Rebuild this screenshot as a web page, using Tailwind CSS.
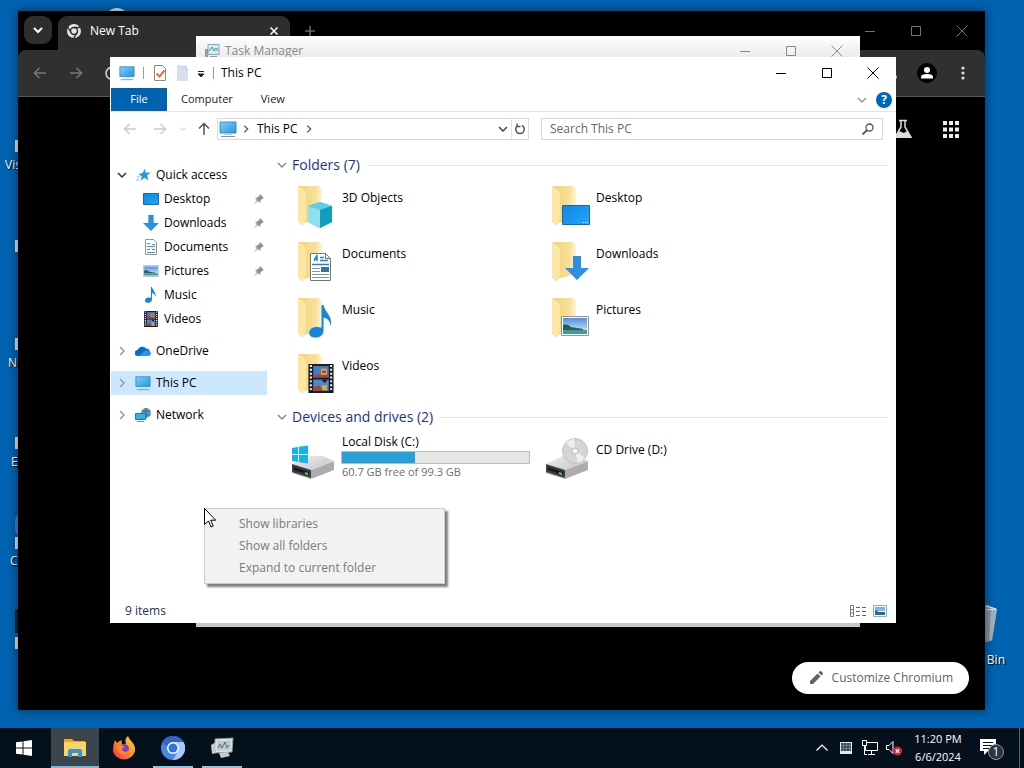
<!DOCTYPE html>
<html lang="en">
<head>
    <meta charset="UTF-8">
    <meta name="viewport" content="width=device-width, initial-scale=1.0">
    <title>This PC</title>
    <script src="https://cdn.jsdelivr.net/npm/@tailwindcss/browser@4"></script>
</head>
<body class="flex flex-col h-screen overflow-hidden bg-[#0063b1] font-['Open_Sans',sans-serif] text-xs text-black">

    <!-- shared icons -->
    <svg class="absolute w-0 h-0" xmlns="http://www.w3.org/2000/svg" aria-hidden="true">
        <defs>
            <linearGradient id="screenBlue" x1="0" y1="0" x2="1" y2="1">
                <stop offset="0" stop-color="#7fd0fb"/><stop offset="1" stop-color="#2196e0"/>
            </linearGradient>
            <linearGradient id="deskBlue" x1="0" y1="0" x2="1" y2="1">
                <stop offset="0" stop-color="#0f86e2"/><stop offset="1" stop-color="#23a5fa"/>
            </linearGradient>
            <linearGradient id="folderBody" x1="0" y1="0" x2="1" y2="0">
                <stop offset="0" stop-color="#f3d173"/><stop offset=".75" stop-color="#f9e19a"/><stop offset="1" stop-color="#fef6dc"/>
            </linearGradient>
            <linearGradient id="driveTop" x1="0" y1="0" x2="1" y2="1">
                <stop offset="0" stop-color="#efedef"/><stop offset="1" stop-color="#c4c2c5"/>
            </linearGradient>
            <linearGradient id="sky" x1="0" y1="0" x2="0" y2="1">
                <stop offset="0" stop-color="#4f8fe0"/><stop offset="1" stop-color="#e6f2fb"/>
            </linearGradient>
            <linearGradient id="fox" x1="1" y1="0" x2="0" y2="1">
                <stop offset="0" stop-color="#ffe03a"/><stop offset=".5" stop-color="#ff8a1f"/><stop offset="1" stop-color="#f0246a"/>
            </linearGradient>
        </defs>
        <symbol id="monitor" viewBox="0 0 18 16">
            <path d="M1 1h16v11H1z" fill="url(#screenBlue)" stroke="#3a8fc8"/>
            <path d="M5 13.500h8" stroke="#c3d3de"/><path d="M2 15.500h14" stroke="#6d9dbb"/>
        </symbol>
        <symbol id="folder" viewBox="0 0 48 48">
            <path d="M7 4h21l3 2v30l-18 5z" fill="url(#folderBody)"/>
            <path d="M7 4l6 4q2 1 2 4v24l-3 8-5-4z" fill="#fbe6a6"/>
        </symbol>
        <symbol id="note" viewBox="0 0 24 32">
            <path d="M12 0h2c1 7 9 10 7 20-1-5-3-7-7-8v13c0 8-14 9-14 2 0-5 6-7 12-5z" fill="#1487dc"/>
        </symbol>
        <symbol id="film" viewBox="0 0 26 30">
            <path d="M0 0h26v30H0z" fill="#1b1b24"/>
            <path d="M5 2h16v12H5z" fill="#4a78c8"/><path d="M5 16h16v12H5z" fill="#4a8ad8"/>
            <path d="M5 11h16v3H5zM5 24l6-2 5 6H5z" fill="#a3472f"/>
            <path d="M13 5h6v6h-6zM14 22h5v5h-5z" fill="#d8ad2c"/><path d="M14 7h4v2h-4z" fill="#b02a20"/>
            <path d="M13 16h7l-3 4z" fill="#222"/>
            <path d="M2.500 1v28M23.500 1v28" stroke="#fff" stroke-width="2" stroke-dasharray="2 2"/>
        </symbol>
        <symbol id="picture" viewBox="0 0 28 20">
            <path d="M.5.5h27v19H.5z" fill="#fff" stroke="#8a959c"/>
            <path d="M2 2h24v16H2z" fill="url(#sky)"/>
            <path d="M2 9q4-2 8 2l12 2v1H2z" fill="#26614c"/><path d="M2 14h24v4H2z" fill="#3f9aa5"/>
        </symbol>
        <symbol id="downArrow" viewBox="0 0 24 24">
            <path d="M8 0h8v12h8L12 24 0 12h8z" fill="#2d8fe0"/>
        </symbol>
        <symbol id="pin" viewBox="0 0 10 10">
            <path d="M6 0l4 4-1.500.5-2 2L6 9 4 7 0 10l3-4-2-2 2.500-.5 2-2z" fill="#8b9299"/>
        </symbol>
        <symbol id="minimize" viewBox="0 0 12 12"><path d="M1 6.500h10" stroke="currentColor"/></symbol>
        <symbol id="maximize" viewBox="0 0 12 12"><path d="M1.500 1.500h9v9h-9z" fill="none" stroke="currentColor"/></symbol>
        <symbol id="close" viewBox="0 0 12 12"><path d="M.5.5l11 11M11.500.5l-11 11" stroke="currentColor"/></symbol>
        <symbol id="chevronDown" viewBox="0 0 12 12"><path d="M2 4l4 4 4-4" fill="none" stroke="currentColor" stroke-width="1.500"/></symbol>
        <symbol id="chevronRight" viewBox="0 0 12 12"><path d="M4 2l4 4-4 4" fill="none" stroke="currentColor" stroke-width="1.500"/></symbol>
        <symbol id="arrowRight" viewBox="0 0 14 14"><path d="M1 7h11M7.500 2l5 5-5 5" fill="none" stroke="currentColor" stroke-width="1.500"/></symbol>
        <symbol id="drive" viewBox="0 0 44 24">
            <path d="M1 10L20 15 43 6v9L20 24 1 18z" fill="#aeacb0"/>
            <path d="M1 9L18 1h14l11 5-23 9z" fill="url(#driveTop)"/>
            <path d="M1 9l19 6v8L1 17z" fill="#3b3d40"/><path d="M3 12l15 5v3L3 15z" fill="#17191b"/>
            <path d="M14 17l3 1v2l-3-1z" fill="#3fe066"/>
        </symbol>
    </svg>

    <main class="relative flex-1">

        <!-- desktop shortcuts peeking out behind the windows -->
        <div class="absolute left-[105px] top-[8px] w-6 h-6 rounded-full bg-[#d5e6f5]"></div>
        <div class="absolute left-[15px] top-[140px] flex flex-col">
            <span class="w-4 h-3 bg-[#d4e4f2]"></span>
            <span class="w-4 h-3 bg-[#d4e4f2] mt-[88px]"></span>
            <span class="w-4 h-3 bg-[#d4e4f2] mt-[86px]"></span>
            <span class="w-4 h-3 bg-[#d4e4f2] mt-[87px]"></span>
            <span class="w-4 h-6 bg-[#4a80c4] rounded-full mt-[64px]"></span>
            <span class="w-4 h-3 bg-[#d4e4f2]"></span>
            <span class="w-4 h-6 bg-[#1c2a36] mt-[60px]"></span>
            <span class="w-4 h-3 bg-[#d4e4f2] mt-1"></span>
        </div>
        <span class="absolute left-[5px] top-[157px] text-white text-shadow-[1px_1px_1px_#000]">Vis</span>
        <span class="absolute left-[8px] top-[355px] text-white text-shadow-[1px_1px_1px_#000]">N</span>
        <span class="absolute left-[11px] top-[454px] text-white text-shadow-[1px_1px_1px_#000]">E</span>
        <span class="absolute left-[10px] top-[553px] text-white text-shadow-[1px_1px_1px_#000]">C</span>
        <div class="absolute right-[19px] top-[604px] flex flex-col items-end">
            <svg class="w-9 h-10 mr-2" viewBox="0 0 36 40"><path d="M3 6l24-5 9 4-5 32-14 2z" fill="#7f93a5"/><path d="M30 4l6 1-5 30-3 2z" fill="#a3b4c2"/><path d="M25 2l10 3-9 1" fill="none" stroke="#dfe8ef"/></svg>
            <span class="mt-2 text-white text-shadow-[1px_1px_1px_#000]">Bin</span>
        </div>

        <!-- Chromium -->
        <section class="absolute left-[18px] right-[39px] top-[11px] bottom-[18px] flex flex-col bg-black text-white shadow-[0_0_10px_#00000080]">
            <div class="flex h-[39px]">
                <button class="ml-[6px] mt-[5px] flex w-7 h-7 items-center justify-center rounded-[9px] bg-[#2e2e2e]" aria-label="Search tabs">
                    <svg class="w-3 h-3" viewBox="0 0 12 12"><path d="M2 4l4 4 4-4" fill="none" stroke="#fff" stroke-width="2"/></svg>
                </button>
                <div class="ml-[6px] mt-[5px] flex w-[232px] items-center rounded-t-[9px] bg-[#2e2e2e] pb-[5px] pl-2 pr-[10px]">
                    <svg class="w-4 h-4" viewBox="0 0 16 16">
                        <circle cx="8" cy="8" r="7" fill="#e6e6e6"/><circle cx="8" cy="8" r="3.500" fill="#e6e6e6" stroke="#2e2e2e" stroke-width="1.500"/>
                        <path d="M8 4.500h7M5 9.800L1.600 3.800M11 9.800L7.500 15.500" stroke="#2e2e2e" stroke-width="1.300"/>
                    </svg>
                    <span class="ml-2 flex-1">New Tab</span>
                    <button aria-label="Close tab"><svg class="w-3 h-3" viewBox="0 0 12 12"><path d="M2.500 2.500l7 7M9.500 2.500l-7 7" stroke="#fff" stroke-width="1.500"/></svg></button>
                </div>
                <button class="ml-[14px] self-center text-[#666]" aria-label="New tab"><svg class="w-3 h-3" viewBox="0 0 12 12"><path d="M6 1v10M1 6h10" stroke="currentColor" stroke-width="1.500"/></svg></button>
                <div class="ml-auto flex text-[#77736c]">
                    <button class="flex w-[46px] items-center justify-center" aria-label="Minimize"><svg class="w-3 h-3"><use href="#minimize"/></svg></button>
                    <button class="flex w-[46px] items-center justify-center" aria-label="Maximize"><svg class="w-3 h-3"><use href="#maximize"/></svg></button>
                    <button class="flex w-[46px] items-center justify-center" aria-label="Close"><svg class="w-3 h-3"><use href="#close"/></svg></button>
                </div>
            </div>
            <div class="flex h-[47px] items-center rounded-t-lg border-b border-[#555] bg-[#303030] pl-[15px] pr-4 text-[#777]">
                <svg class="w-[14px] h-[14px] -scale-x-100"><use href="#arrowRight"/></svg>
                <svg class="ml-[22px] w-[14px] h-[14px]"><use href="#arrowRight"/></svg>
                <svg class="ml-[22px] w-[14px] h-[14px]" viewBox="0 0 14 14"><path d="M12 4a6 6 0 1 0 1 4" fill="none" stroke="#ddd" stroke-width="1.500"/></svg>
                <span class="ml-auto mt-2 w-1 h-1 rounded-full bg-[#ccc]"></span>
                <svg class="ml-5 w-5 h-5" viewBox="0 0 20 20"><circle cx="10" cy="10" r="10" fill="#000"/><circle cx="10" cy="7" r="3" fill="#fff"/><path d="M4 15.500v-1.500q0-3 6-3t6 3v1.500z" fill="#fff"/></svg>
                <svg class="ml-5 w-3 h-4" viewBox="0 0 12 16"><g fill="#ddd"><circle cx="6" cy="3" r="1.600"/><circle cx="6" cy="8" r="1.600"/><circle cx="6" cy="13" r="1.600"/></g></svg>
            </div>
            <div class="flex flex-1 flex-col justify-between pt-[22px] pr-4 pb-4">
                <div class="flex justify-end gap-7 pr-2">
                    <svg class="w-5 h-5" viewBox="0 0 20 20"><path d="M6 1.500h8M8 2v6L2 18.200h16L12 8V2" fill="none" stroke="#ddd" stroke-width="1.500"/><path d="M6 12l5 2 3-2 4 6.500H2z" fill="#ddd"/></svg>
                    <svg class="w-5 h-5" viewBox="0 0 20 20"><path d="M4 2v17M10 2v17M16 2v17" stroke="#eee" stroke-width="4" stroke-dasharray="4 2.500"/></svg>
                </div>
                <button class="flex h-8 items-center self-end rounded-full bg-white px-4 text-xs text-[#5f6368]">
                    <svg class="mr-2 w-4 h-4" viewBox="0 0 16 16"><path d="M2 14v-3l7.500-7.500 3 3L5 14zM10.500 2.500l1.200-1.200q.8-.5 1.500 0l1.500 1.500q.5.700 0 1.500L13.500 5.500z" fill="#5f6368"/></svg>
                    Customize Chromium
                </button>
            </div>
        </section>

        <!-- Task Manager -->
        <section class="absolute left-[196px] right-[164px] top-[36px] bottom-[101px] border-b-4 border-[#c8c8c8] bg-white">
            <header class="flex h-[29px] bg-linear-to-b from-white to-[#e4e4e4] pl-2 text-[#888]">
                <svg class="mt-[7px] w-4 h-4" viewBox="0 0 16 16"><path d="M4 1.500h11v10H4z" fill="#d5ecf6" stroke="#8aa"/><path d="M5 8l3-4 2 4 2-3 2 3" fill="none" stroke="#3a8fb8"/><path d="M1 6h3v8H1zM6 13h7v2H6z" fill="#999"/></svg>
                <h2 class="ml-[5px] mt-[7px] flex-1">Task Manager</h2>
                <button class="flex w-[46px] items-center justify-center" aria-label="Minimize"><svg class="w-3 h-3"><use href="#minimize"/></svg></button>
                <button class="flex w-[46px] items-center justify-center" aria-label="Maximize"><svg class="w-3 h-3"><use href="#maximize"/></svg></button>
                <button class="flex w-[46px] items-center justify-center" aria-label="Close"><svg class="w-3 h-3"><use href="#close"/></svg></button>
            </header>
        </section>

        <!-- File Explorer -->
        <section class="absolute left-[110px] right-[128px] top-[57px] bottom-[105px] flex flex-col bg-white pl-px">
            <header class="flex h-[31px] items-center pl-2">
                <svg class="w-4 h-4"><use href="#monitor"/></svg>
                <span class="ml-2 w-px h-3 bg-[#999]"></span>
                <svg class="ml-2 w-4 h-4" viewBox="0 0 16 16"><path d="M2.500.5h8l3 3v12h-11z" fill="#fff" stroke="#888"/><path d="M4.500 8.500l3 3 5-6" fill="none" stroke="#f0702a" stroke-width="2"/></svg>
                <svg class="ml-[7px] w-4 h-4" viewBox="0 0 16 16"><path d="M2 1h9l2 3v12H2z" fill="#d6e0ec"/><path d="M2 1h9v4h2" fill="none" stroke="#c5cfdb"/></svg>
                <svg class="ml-[6px] w-2 h-3" viewBox="0 0 8 12"><path d="M1 4.500h6M1 7h6L4 10z" fill="#222" stroke="#222" stroke-width="1"/></svg>
                <span class="ml-2 w-px h-3 bg-[#999]"></span>
                <h1 class="ml-[7px] flex-1">This PC</h1>
                <button class="flex w-[46px] items-center justify-center" aria-label="Minimize"><svg class="w-3 h-3"><use href="#minimize"/></svg></button>
                <button class="flex w-[46px] items-center justify-center" aria-label="Maximize"><svg class="w-3 h-3"><use href="#maximize"/></svg></button>
                <button class="flex w-[46px] items-center justify-center" aria-label="Close"><svg class="w-3 h-3"><use href="#close"/></svg></button>
            </header>

            <div class="flex h-6 items-center border-b border-[#e3e3e3] text-[11px] text-[#222]">
                <button class="w-14 self-stretch bg-[#0063b1] text-white">File</button>
                <button class="ml-[14px]">Computer</button>
                <button class="ml-7">View</button>
                <button class="ml-auto text-[#999]" aria-label="Expand the Ribbon"><svg class="w-3 h-3"><use href="#chevronDown"/></svg></button>
                <button class="ml-2 mr-1 flex w-4 h-4 items-center justify-center rounded-full bg-[#0066b8] text-xs font-bold text-white" aria-label="Help">?</button>
            </div>

            <div class="flex h-[34px] items-center pl-3 pr-[13px] text-[#444]">
                <button class="text-[#ccc]" aria-label="Back"><svg class="w-[14px] h-[14px] -scale-x-100"><use href="#arrowRight"/></svg></button>
                <button class="ml-4 text-[#ccc]" aria-label="Forward"><svg class="w-[14px] h-[14px]"><use href="#arrowRight"/></svg></button>
                <button class="ml-3 text-[#ccc]" aria-label="Recent locations"><svg class="w-2 h-2"><use href="#chevronDown"/></svg></button>
                <button class="ml-[10px] text-[#555]" aria-label="Up"><svg class="w-[14px] h-[14px] -rotate-90"><use href="#arrowRight"/></svg></button>
                <div class="ml-[6px] flex h-[22px] flex-1 items-center border border-[#d9d9d9] pl-px">
                    <svg class="w-[18px] h-4"><use href="#monitor"/></svg>
                    <svg class="ml-1 w-[10px] h-[10px] text-[#555]"><use href="#chevronRight"/></svg>
                    <button class="ml-[6px] text-black">This PC</button>
                    <svg class="ml-[6px] w-[10px] h-[10px] text-[#555]"><use href="#chevronRight"/></svg>
                    <button class="ml-auto mr-[2px]" aria-label="Previous locations"><svg class="w-3 h-3"><use href="#chevronDown"/></svg></button>
                    <button class="flex self-stretch items-center border-l border-[#e3e3e3] px-[2px]" aria-label="Refresh"><svg class="w-3 h-3" viewBox="0 0 12 12"><path d="M8 2.500a4.300 4.300 0 1 1-4.500.3M3 .5v3h3.500" fill="none" stroke="#555" stroke-width="1.500"/></svg></button>
                </div>
                <label class="ml-3 flex h-[22px] w-[342px] items-center border border-[#d9d9d9] px-2">
                    <input type="text" placeholder="Search This PC" aria-label="Search This PC" class="min-w-0 flex-1 outline-none placeholder:text-[#666]">
                    <svg class="w-3 h-3" viewBox="0 0 12 12"><circle cx="7.500" cy="4.500" r="3.500" fill="none" stroke="#555" stroke-width="1.300"/><path d="M5 7L.5 11.500" stroke="#555" stroke-width="1.800"/></svg>
                </label>
            </div>

            <div class="flex flex-1">
                <nav class="w-[156px] pt-[17px]" aria-label="Navigation pane">
                    <a href="#" class="flex h-6 items-center pl-[5px]">
                        <svg class="w-3 h-3 text-[#333]"><use href="#chevronDown"/></svg>
                        <svg class="ml-2 w-4 h-4" viewBox="0 0 16 16"><path d="M8.500 1.500l1.300 4.300 5-.2-3.800 3 1.500 5-4.200-2.900L4.500 14l1.300-4.500L2.500 7l4.300-.9z" fill="#2a95de"/><path d="M1 10h3M0 13h3" stroke="#79bdec"/></svg>
                        <span class="ml-1">Quick access</span>
                    </a>
                    <a href="#" class="flex h-6 items-center pl-8">
                        <svg class="w-4 h-4" viewBox="0 0 16 16"><path d="M.5 2.500h15v11H.5z" fill="url(#deskBlue)" stroke="#1769aa"/></svg>
                        <span class="ml-[5px] flex-1">Desktop</span>
                        <svg class="mr-[3px] w-[10px] h-[10px]"><use href="#pin"/></svg>
                    </a>
                    <a href="#" class="flex h-6 items-center pl-8">
                        <svg class="w-4 h-4"><use href="#downArrow"/></svg>
                        <span class="ml-[5px] flex-1">Downloads</span>
                        <svg class="mr-[3px] w-[10px] h-[10px]"><use href="#pin"/></svg>
                    </a>
                    <a href="#" class="flex h-6 items-center pl-8">
                        <svg class="w-4 h-4" viewBox="0 0 16 16"><path d="M2.500.5h8l3 3v12h-11z" fill="#fff" stroke="#8b959c"/><path d="M4 4.500h3M9 5.500h3M4 7.500h8M4 10.500h3M9 10.500h3M4 13.500h8" stroke="#4592c6"/></svg>
                        <span class="ml-[5px] flex-1">Documents</span>
                        <svg class="mr-[3px] w-[10px] h-[10px]"><use href="#pin"/></svg>
                    </a>
                    <a href="#" class="flex h-6 items-center pl-8">
                        <svg class="w-4 h-4"><use href="#picture"/></svg>
                        <span class="ml-[5px] flex-1">Pictures</span>
                        <svg class="mr-[3px] w-[10px] h-[10px]"><use href="#pin"/></svg>
                    </a>
                    <a href="#" class="flex h-6 items-center pl-8">
                        <svg class="w-4 h-4"><use href="#note"/></svg>
                        <span class="ml-[5px]">Music</span>
                    </a>
                    <a href="#" class="flex h-6 items-center pl-8">
                        <svg class="w-4 h-4"><use href="#film"/></svg>
                        <span class="ml-[5px]">Videos</span>
                    </a>
                    <a href="#" class="mt-2 flex h-6 items-center pl-[5px]">
                        <svg class="w-3 h-3 text-[#999]"><use href="#chevronRight"/></svg>
                        <svg class="ml-[7px] w-4 h-4" viewBox="0 0 16 16"><path d="M3 13a3 3 0 0 1-.5-6A5 5 0 0 1 11 5.500a4 4 0 0 1 2 7.500z" fill="#0f6cc4"/><path d="M4 13l6-5.500Q16 7 16 11q-.5 2-3 2z" fill="#2797e8"/></svg>
                        <span class="ml-[5px]">OneDrive</span>
                    </a>
                    <a href="#" class="mt-2 flex h-6 items-center bg-[#cce8ff] pl-[5px]">
                        <svg class="w-3 h-3 text-[#999]"><use href="#chevronRight"/></svg>
                        <svg class="ml-[7px] w-4 h-4"><use href="#monitor"/></svg>
                        <span class="ml-[5px]">This PC</span>
                    </a>
                    <a href="#" class="mt-2 flex h-6 items-center pl-[5px]">
                        <svg class="w-3 h-3 text-[#999]"><use href="#chevronRight"/></svg>
                        <svg class="ml-[7px] w-4 h-4" viewBox="0 0 16 16"><circle cx="11" cy="6" r="5" fill="#5d9fc4"/><path d="M11 1v10M7 4h8M7 8h8" stroke="#2f6f97"/><path d="M.5 6.500h10v6H.5z" fill="#38aef0" stroke="#2278ae"/><path d="M2 14.500h7" stroke="#6d9dbb"/></svg>
                        <span class="ml-[5px]">Network</span>
                    </a>
                </nav>

                <div class="flex-1 pt-2 pl-[9px] pr-[9px]">
                    <h2 class="flex h-[22px] items-center text-[14px] text-[#1e3287]">
                        <svg class="w-3 h-3 text-[#888]"><use href="#chevronDown"/></svg>
                        <span class="ml-1">Folders (7)</span>
                        <span class="ml-2 h-px flex-1 bg-[#e5e5e5]"></span>
                    </h2>
                    <ul class="mt-[6px] grid grid-cols-[repeat(auto-fill,254px)] auto-rows-[56px] pl-[15px]">
                        <li class="flex gap-[3px]">
                            <svg class="w-12 h-12" viewBox="0 0 48 48"><use href="#folder"/><path d="M29 20l12 4v16l-12 6-12-6V24z" fill="#35b8d8"/><path d="M17 24l12-4 12 4-12 4z" fill="#5fcfe6"/><path d="M29 28l12-4v16l-12 6z" fill="#119cc0"/><path d="M17 24l12 4v18l-12-6z" fill="#8fdfee"/></svg>
                            <span class="mt-2">3D Objects</span>
                        </li>
                        <li class="flex gap-[3px]">
                            <svg class="w-12 h-12" viewBox="0 0 48 48"><use href="#folder"/><path d="M17.500 23.500h27v19h-27z" fill="url(#deskBlue)" stroke="#1769aa"/><path d="M38 40.500h6" stroke="#fff" stroke-dasharray="1 1"/></svg>
                            <span class="mt-2">Desktop</span>
                        </li>
                        <li class="flex gap-[3px]">
                            <svg class="w-12 h-12" viewBox="0 0 48 48"><use href="#folder"/><path d="M19.500 15.500h15l5 5v22h-20z" fill="#fff" stroke="#70787e"/><path d="M34.500 15.500v5h5" fill="none" stroke="#70787e"/><path d="M23 23l3-6v6m-3-2h3M29 19.500h4M29 22.500h8M21 26.500h17" fill="none" stroke="#1a86c8" stroke-width="1.500"/><path d="M21 30.500h8M21 33.500h8M21 36.500h17M21 39.500h17" stroke="#7e98a8"/><path d="M30 29h8v5h-8z" fill="#3f6fa0"/></svg>
                            <span class="mt-2">Documents</span>
                        </li>
                        <li class="flex gap-[3px]">
                            <svg class="w-12 h-12" viewBox="0 0 48 48"><use href="#folder"/><use href="#downArrow" x="20" y="18" width="24" height="24"/></svg>
                            <span class="mt-2">Downloads</span>
                        </li>
                        <li class="flex gap-[3px]">
                            <svg class="w-12 h-12" viewBox="0 0 48 48"><use href="#folder"/><use href="#note" x="18" y="11" width="25" height="33"/></svg>
                            <span class="mt-2">Music</span>
                        </li>
                        <li class="flex gap-[3px]">
                            <svg class="w-12 h-12" viewBox="0 0 48 48"><use href="#folder"/><use href="#picture" x="16" y="22" width="28" height="20"/></svg>
                            <span class="mt-2">Pictures</span>
                        </li>
                        <li class="flex gap-[3px]">
                            <svg class="w-12 h-12" viewBox="0 0 48 48"><use href="#folder"/><use href="#film" x="17" y="14" width="26" height="29"/></svg>
                            <span class="mt-2">Videos</span>
                        </li>
                    </ul>

                    <h2 class="flex h-[22px] items-center text-[14px] text-[#1e3287]">
                        <svg class="w-3 h-3 text-[#888]"><use href="#chevronDown"/></svg>
                        <span class="ml-1">Devices and drives (2)</span>
                        <span class="ml-2 h-px flex-1 bg-[#e5e5e5]"></span>
                    </h2>
                    <ul class="mt-[6px] grid grid-cols-[repeat(auto-fill,254px)] pl-[15px]">
                        <li class="flex gap-[2px]">
                            <svg class="w-12 h-12" viewBox="0 0 48 48"><use href="#drive" x="0" y="21" width="44" height="24"/><path d="M1 14l6-1v7H1zM8 12.800l9-1.300v8.500H8zM1 21h6v7l-6-1zM8 21h9v8.500L8 28.300z" fill="#12b5ea"/></svg>
                            <div class="w-[189px]">
                                <p class="pl-px">Local Disk (C:)</p>
                                <div class="mt-px h-[13px] border border-[#bcbcbc] bg-[#e6e6e6]"><div class="h-full bg-[#26a0da]" style="width: 38.9%"></div></div>
                                <p class="mt-px pl-px text-[11px] text-[#6d6d6d]">60.7 GB free of 99.3 GB</p>
                            </div>
                        </li>
                        <li class="flex gap-[3px]">
                            <svg class="w-12 h-12" viewBox="0 0 48 48"><use href="#drive" x="0" y="21" width="44" height="24"/><circle cx="30" cy="17" r="12.500" fill="#d3d6d7" stroke="#bfc3c5"/><path d="M30 17l-9-8q4-4 8-4.500zM30 17l10 7q-3 4-7 5z" fill="#eceeef"/><circle cx="30" cy="17" r="3" fill="#f7f7f7" stroke="#bbb"/></svg>
                            <span class="mt-2">CD Drive (D:)</span>
                        </li>
                    </ul>
                </div>
            </div>

            <footer class="flex h-[25px] items-center pl-[14px] pr-[9px] text-[#1f3350]">
                <span class="flex-1">9 items</span>
                <button aria-label="Details view"><svg class="w-4 h-3" viewBox="0 0 16 12"><path d="M.5.5h3v11h-3zM.5 4.500h3M.5 8h3" fill="none" stroke="#777"/><path d="M6 2.500h10M6 6.500h10M6 10.500h10" stroke="#666" stroke-dasharray="4 2"/></svg></button>
                <button class="ml-[7px]" aria-label="Large icons view"><svg class="w-[14px] h-3" viewBox="0 0 14 12"><path d="M.5.5h13v11H.5z" fill="#fff" stroke="#79b8e8"/><path d="M2 2h10v4H2z" fill="#7fb4ee"/><path d="M2 5l4 2h6v3H2z" fill="#24707f"/></svg></button>
            </footer>
        </section>

        <!-- context menu -->
        <div role="menu" class="absolute left-[204px] top-[508px] w-[241px] border border-[#ccc] bg-[#f2f2f2] py-1 text-[#7a7a7a] shadow-[3px_3px_2px_#00000080]">
            <button role="menuitem" class="block h-[22px] w-full pl-[34px] text-left">Show libraries</button>
            <button role="menuitem" class="block h-[22px] w-full pl-[34px] text-left">Show all folders</button>
            <button role="menuitem" class="block h-[22px] w-full pl-[34px] text-left">Expand to current folder</button>
        </div>
        <svg class="absolute left-[204px] top-[508px] w-3 h-5" viewBox="0 0 12 20"><path d="M.5.5v16l4-3.500 2.500 6 2.200-1-2.500-5.800h5z" fill="#fff" stroke="#000"/></svg>
    </main>

    <!-- taskbar -->
    <footer class="z-10 flex h-10 bg-[#04101c] text-white">
        <button class="mr-[3px] flex w-12 items-center justify-center" aria-label="Start">
            <svg class="w-4 h-4" viewBox="0 0 16 16"><path d="M0 2.300l6.500-.9v6.100H0zM7.500 1.200L16 0v7.500H7.500zM0 8.500h6.500v6.100L0 13.700zM7.500 8.500H16V16l-8.500-1.200z" fill="#fff"/></svg>
        </button>
        <div class="flex gap-px">
            <button class="flex w-12 items-center justify-center border-b-2 border-[#76b9ed] bg-[#3b454e] pt-[2px]" aria-label="File Explorer">
                <svg class="w-6 h-5" viewBox="0 0 24 20"><path d="M1 1h8l2 2h11v4H1z" fill="#e8a91c"/><path d="M1 4h22v14H1z" fill="#fcd462"/><path d="M5 19v-6q0-2 2-2h10q2 0 2 2v6h-4v-4H9v4z" fill="#3295d8"/></svg>
            </button>
            <button class="flex w-12 items-center justify-center" aria-label="Firefox">
                <svg class="w-6 h-6" viewBox="0 0 24 24"><path d="M3 4l2 3q2-2 5-3-1 2 0 4h4q-2-5 2-8 1 3 4 6 3 3 3 7.500a11 10 0 0 1-22 0Q1 8 3 4z" fill="url(#fox)"/><circle cx="12" cy="13" r="5" fill="#7a42d0"/><path d="M5 10q4-2 8 1-3 0-3 3 3 4 7 0-2 6-8 4-4-2-4-8z" fill="#ff8a20"/></svg>
            </button>
            <button class="flex w-12 justify-center" aria-label="Chromium">
                <span class="flex w-10 items-center justify-center border-b-2 border-[#8fc3ec] pt-[2px]">
                    <svg class="w-6 h-6" viewBox="0 0 24 24"><circle cx="12" cy="12" r="12" fill="#4a86e0"/><path d="M12 6h10.500A12 12 0 0 1 12 24l5-9z" fill="#a6c8fa"/><path d="M1.500 6A12 12 0 0 1 22.500 6H12q-5 0-6 5z" fill="#2f66bf"/><circle cx="12" cy="12" r="6" fill="#fff"/><circle cx="12" cy="12" r="4.500" fill="#2f75e0"/></svg>
                </span>
            </button>
            <button class="flex w-12 justify-center" aria-label="Task Manager">
                <span class="flex w-10 items-center justify-center border-b-2 border-[#8fc3ec] pt-[2px]">
                    <svg class="w-6 h-6" viewBox="0 0 24 24"><path d="M5 3l18-1-1 14-17 1z" fill="#dfe3e4" stroke="#8c9698"/><path d="M7 5l14-.5-1 9.500-13 .5z" fill="#bdcacc"/><path d="M8 12l2-4 2 4 3-6 2 6 2-3" fill="none" stroke="#3e7984"/><path d="M1 9l5-3v11l-4 1zM9 17l9-1 2 4-9 2z" fill="#c5caca"/></svg>
                </span>
            </button>
        </div>
        <div class="ml-auto flex items-center">
            <svg class="w-3 h-3" viewBox="0 0 12 12"><path d="M.5 8.500L6 3l5.500 5.500" fill="none" stroke="#fff" stroke-width="1.200"/></svg>
            <svg class="ml-3 w-3 h-3" viewBox="0 0 12 12"><path d="M0 0h12v12H0z" fill="#dcecf5"/><path d="M1 1h10v8H1z" fill="#3c4c57"/><path d="M1 3.500h10M1 6.500h10M3.500 1v8M6.500 1v8M9.500 1v8" stroke="#8da0ac" stroke-width=".5"/></svg>
            <svg class="ml-[10px] w-4 h-4" viewBox="0 0 16 16"><path d="M5 2.500h10.500v8H3.500V6M9.500 11v3M6 14.500h7M.5.5h4v5h-4zM2.500 6v8.500H5" fill="none" stroke="#fff"/></svg>
            <svg class="ml-2 w-4 h-4" viewBox="0 0 16 16"><path d="M.5 5.500H3l4-4v12l-4-4H.5z" fill="none" stroke="#fff"/><circle cx="11.500" cy="11" r="4.500" fill="#d9212f"/><path d="M9.800 9.300l3.400 3.400M13.200 9.300l-3.400 3.400" stroke="#fff" stroke-width="1.300"/></svg>
            <div class="ml-[11px] w-[50px] whitespace-nowrap text-center text-[11px] leading-[18px]">
                <p>11:20 PM</p>
                <p>6/6/2024</p>
            </div>
            <button class="ml-4 mr-[14px]" aria-label="1 new notification">
                <svg class="w-[26px] h-6" viewBox="0 0 26 24"><path d="M1 3h16v12h-8l-4 4v-4H1z" fill="#fff"/><path d="M4 6.500h10M4 9.500h10M4 12.500h6" stroke="#04101c"/><circle cx="17" cy="16" r="7.500" fill="#2b3640" stroke="#8b949b"/><text x="17" y="20" text-anchor="middle" font-size="12" fill="#fff">1</text></svg>
            </button>
            <span class="mr-1 w-px self-stretch bg-[#59636c]"></span>
        </div>
    </footer>
</body>
</html>
